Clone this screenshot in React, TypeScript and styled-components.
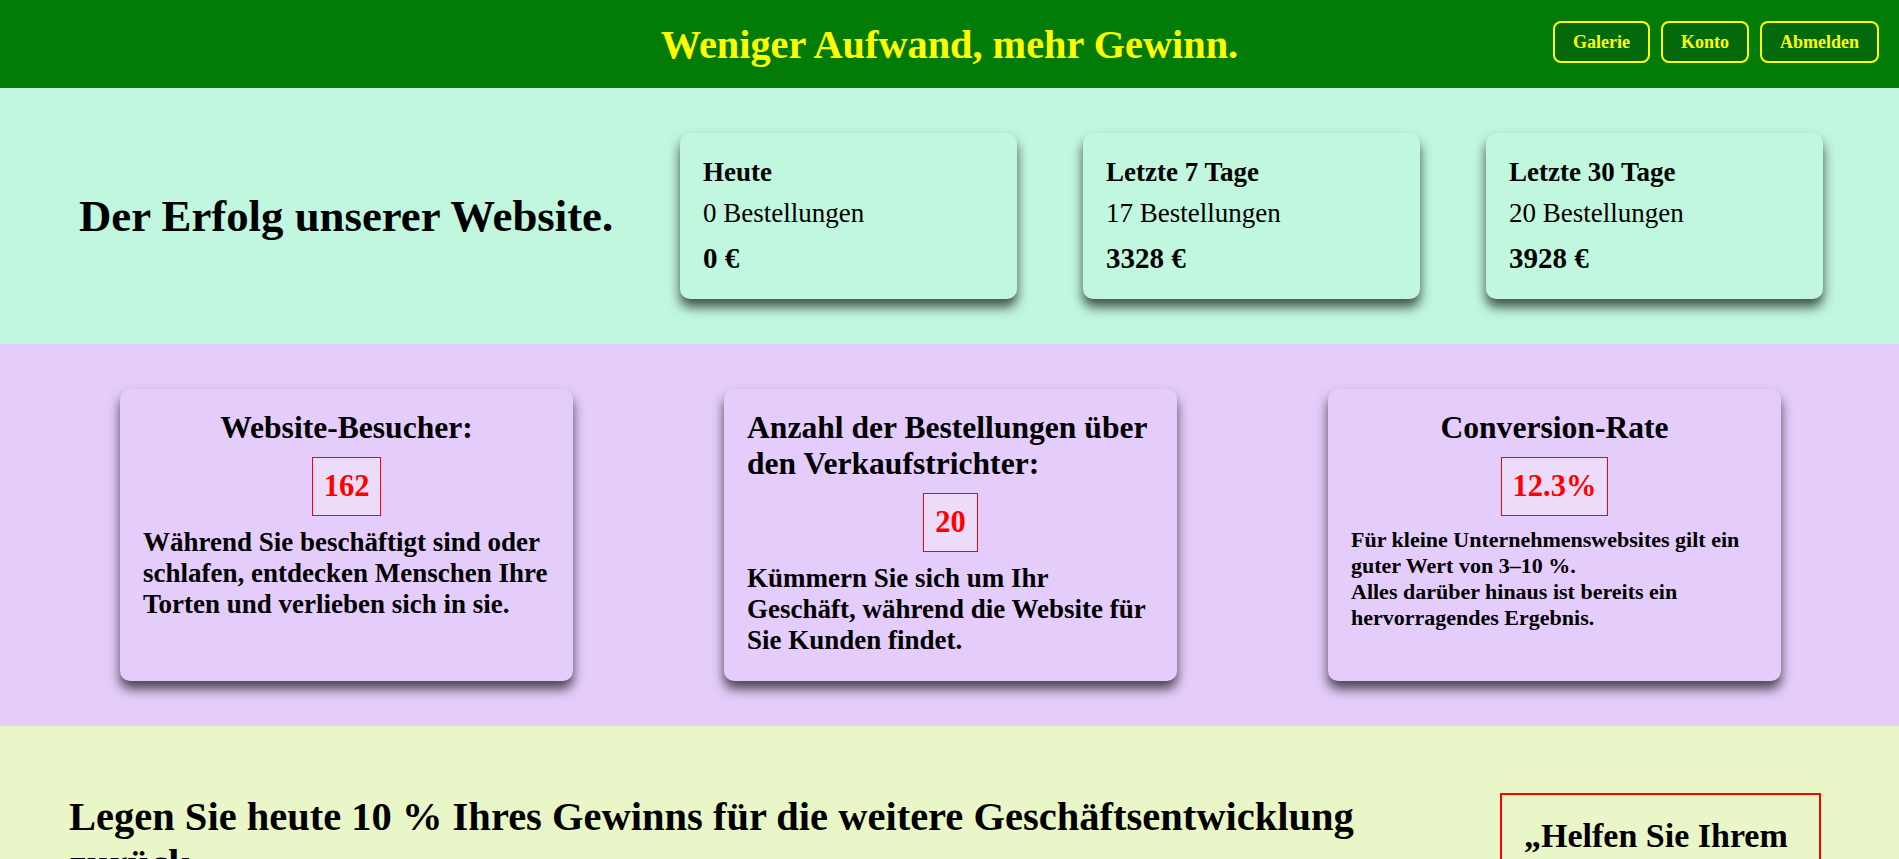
import React from 'react';
import styled, { createGlobalStyle } from 'styled-components';

/* ── global ── */

const GlobalStyle = createGlobalStyle`
  html, body {
    margin: 0;
    padding: 0;
    font-family: 'Liberation Serif', 'Times New Roman', Times, serif;
    color: #000;
  }
  * { box-sizing: border-box; }
`;

/* ── header ── */

const Header = styled.header`
  position: relative;
  height: 88px;
  background: #037b07;
  display: flex;
  align-items: center;
  justify-content: center;
`;

const SiteTitle = styled.h1`
  margin: 0;
  font-size: 40.3px;
  font-weight: 700;
  color: #ffff00;
`;

const Nav = styled.nav`
  position: absolute;
  right: 20px;
  top: 21px;
  display: flex;
  gap: 11px;
`;

const NavBtn = styled.button`
  height: 42px;
  padding: 0 18px;
  border: 2px solid #ffff00;
  border-radius: 8px;
  background: #04690a;
  color: #ffff00;
  font-family: inherit;
  font-size: 18px;
  font-weight: 700;
  cursor: pointer;
`;

/* ── sales summary ── */

const Summary = styled.section`
  height: 256px;
  background: #c1f7df;
  display: flex;
  align-items: center;
  padding: 0 76px 0 79px;
`;

const SummaryTitle = styled.h2`
  margin: 0 66px 0 0;
  flex: 1;
  font-size: 44.8px;
  font-weight: 700;
  white-space: nowrap;
`;

const StatCards = styled.div`
  display: flex;
  gap: 66px;
`;

const StatCard = styled.div`
  width: 337px;
  height: 166px;
  background: #c1f7df;
  border-radius: 10px;
  box-shadow: 0 8px 12px rgba(0, 0, 0, 0.68);
  padding: 24px 23px;
  display: flex;
  flex-direction: column;
  gap: 10px;
`;

const StatLabel = styled.div`
  font-size: 27px;
  font-weight: 700;
`;

const StatOrders = styled.div`
  font-size: 27px;
`;

const StatAmount = styled.div`
  font-size: 29px;
  font-weight: 700;
  margin-top: 3px;
`;

/* ── metrics ── */

const Metrics = styled.section`
  height: 382px;
  background: #e4cdfb;
  display: flex;
  justify-content: space-between;
  align-items: flex-start;
  padding: 45px 118px 0 120px;
`;

const MetricCard = styled.div`
  width: 453px;
  height: 292px;
  background: #e4cdfb;
  border-radius: 10px;
  box-shadow: 0 8px 12px rgba(0, 0, 0, 0.68);
  padding: 21px 23px 25px;
  display: flex;
  flex-direction: column;
  align-items: center;
  gap: 11px;
`;

const MetricTitle = styled.h3`
  margin: 0;
  font-size: 31.6px;
  font-weight: 700;
`;

const MetricValue = styled.div`
  border: 1px solid #ff0000;
  background: #eddcf9;
  color: #ff0000;
  font-size: 30.5px;
  font-weight: 700;
  padding: 11px 11px;
`;

const MetricText = styled.p<{ $small?: boolean }>`
  margin: 0;
  font-size: ${(p) => (p.$small ? '22px' : '27px')};
  font-weight: 700;
`;

/* ── reinvest ── */

const Reinvest = styled.section`
  background: #e8f6c8;
  display: flex;
  align-items: flex-start;
  gap: 60px;
  padding: 67px 78px 60px 69px;
`;

const ReinvestTitle = styled.h2`
  margin: 0;
  flex: 1;
  font-size: 40.5px;
  font-weight: 700;
`;

const QuoteBox = styled.div`
  width: 321px;
  border: 2px solid #ff0000;
  padding: 22px 22px;
`;

const Quote = styled.div`
  font-size: 34px;
  font-weight: 700;
`;

export default function App() {
  return (
    <>
      <GlobalStyle />
      <Header>
        <SiteTitle>Weniger Aufwand, mehr Gewinn.</SiteTitle>
        <Nav>
          <NavBtn>Galerie</NavBtn>
          <NavBtn>Konto</NavBtn>
          <NavBtn>Abmelden</NavBtn>
        </Nav>
      </Header>

      <Summary>
        <SummaryTitle>Der Erfolg unserer Website.</SummaryTitle>
        <StatCards>
          <StatCard>
            <StatLabel>Heute</StatLabel>
            <StatOrders>0 Bestellungen</StatOrders>
            <StatAmount>0 €</StatAmount>
          </StatCard>
          <StatCard>
            <StatLabel>Letzte 7 Tage</StatLabel>
            <StatOrders>17 Bestellungen</StatOrders>
            <StatAmount>3328 €</StatAmount>
          </StatCard>
          <StatCard>
            <StatLabel>Letzte 30 Tage</StatLabel>
            <StatOrders>20 Bestellungen</StatOrders>
            <StatAmount>3928 €</StatAmount>
          </StatCard>
        </StatCards>
      </Summary>

      <Metrics>
        <MetricCard>
          <MetricTitle>Website-Besucher:</MetricTitle>
          <MetricValue>162</MetricValue>
          <MetricText>
            Während Sie beschäftigt sind oder schlafen, entdecken Menschen Ihre Torten und verlieben sich in sie.
          </MetricText>
        </MetricCard>
        <MetricCard>
          <MetricTitle>Anzahl der Bestellungen über den Verkaufstrichter:</MetricTitle>
          <MetricValue>20</MetricValue>
          <MetricText>
            Kümmern Sie sich um Ihr Geschäft, während die Website für Sie Kunden findet.
          </MetricText>
        </MetricCard>
        <MetricCard>
          <MetricTitle>Conversion-Rate</MetricTitle>
          <MetricValue>12.3%</MetricValue>
          <MetricText $small>
            Für kleine Unternehmenswebsites gilt ein guter Wert von 3–10 %.
            <br />
            Alles darüber hinaus ist bereits ein hervorragendes Ergebnis.
          </MetricText>
        </MetricCard>
      </Metrics>

      <Reinvest>
        <ReinvestTitle>
          Legen Sie heute 10 % Ihres Gewinns für die weitere Geschäftsentwicklung zurück.
        </ReinvestTitle>
        <QuoteBox>
          <Quote>„Helfen Sie Ihrem Unternehmen zu wachsen.“</Quote>
        </QuoteBox>
      </Reinvest>
    </>
  );
}
